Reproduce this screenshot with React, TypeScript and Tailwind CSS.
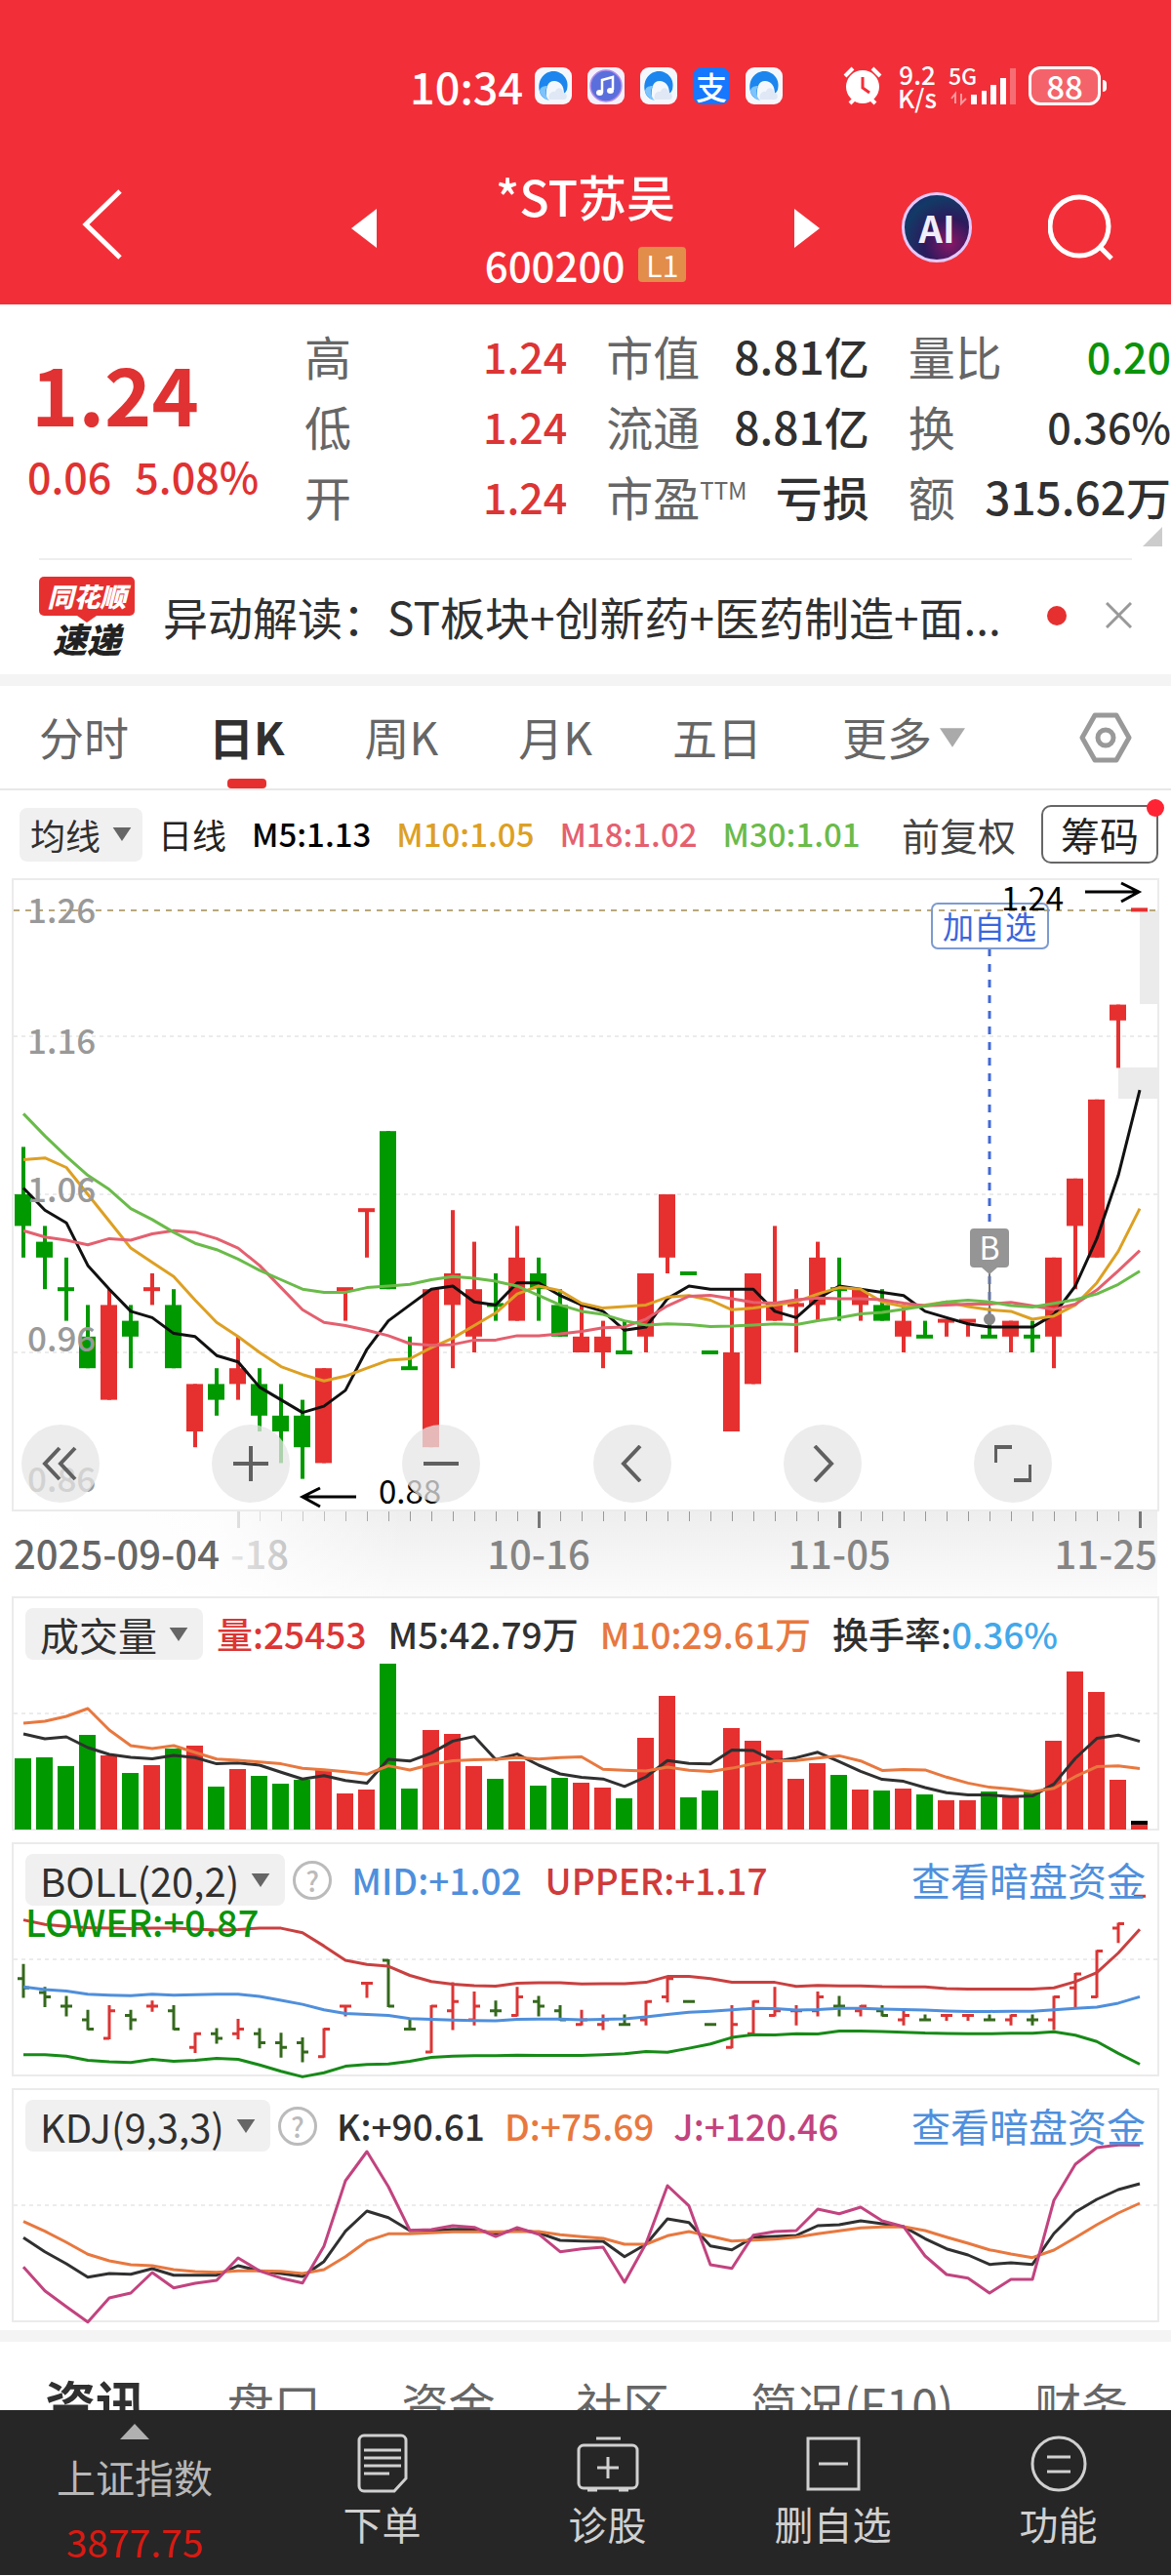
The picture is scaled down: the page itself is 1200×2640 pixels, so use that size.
import React from "react";

// [open, close, high, low] in cents
const candles = [
  [106, 104, 109, 102], [103, 102, 104, 100], [100, 100, 102, 98], [97, 95, 99, 95],
  [93, 99, 100, 93], [98, 97, 99, 95], [100, 100, 101, 99], [99, 95, 100, 95],
  [91, 94, 94, 90], [94, 93, 95, 92], [94, 95, 97, 93], [94, 92, 95, 91],
  [92, 91, 94, 89], [92, 90, 93, 88], [89, 95, 95, 89], [100, 100, 100, 98],
  [105, 105, 105, 102], [110, 100, 110, 100], [95, 95, 97, 95], [90, 100, 100, 90],
  [99, 101, 105, 95], [97, 100, 103, 96], [99, 99, 101, 98], [98, 102, 104, 98],
  [101, 100, 102, 98], [99, 97, 100, 97], [96, 97, 99, 96], [96, 97, 98, 95],
  [96, 96, 98, 96], [97, 101, 101, 96], [102, 106, 106, 101], [101, 101, 101, 101],
  [96, 96, 96, 96], [91, 96, 100, 91], [94, 101, 101, 94], [98, 99, 104, 98],
  [99, 99, 100, 96], [99, 102, 103, 98], [100, 100, 102, 98], [99, 100, 100, 98],
  [99, 98, 100, 98], [97, 98, 99, 96], [97, 97, 98, 97], [98, 98, 98, 97],
  [98, 98, 98, 97], [97, 97, 98, 97], [97, 98, 98, 96], [97, 97, 98, 96],
  [97, 102, 102, 95], [104, 107, 107, 100], [102, 112, 112, 102], [117, 118, 118, 114],
  [124, 124, 124, 124],
];

const volumes = [
  73, 74, 65, 97, 76, 58, 66, 83, 86, 44, 62, 55, 47, 51, 61, 37, 41, 170, 42, 102,
  98, 65, 52, 70, 45, 53, 48, 43, 32, 94, 137, 33, 40, 104, 91, 81, 52, 68, 56, 41,
  40, 42, 36, 30, 30, 39, 34, 39, 91, 162, 141, 51, 7,
];

// averages for the days before the window is full
const lead5 = [106.4, 105, 104.2, 101.5];
const lead10 = [108.2, 108.3, 107.7, 106, 104.3, 102.6, 101.7, 100.8, 99.3];
const lead18 = [
  103.7, 103.3, 103.1, 102.8, 103.2, 103.1, 103.5, 103.7, 103.6, 103.2, 102.6, 101.5,
  100.1, 98.7, 97.9, 97.7, 97.4,
];
const lead30 = [
  111.1, 109.7, 108.4, 107.2, 106.3, 105.1, 104.4, 103.6, 102.9, 102.5, 101.9, 101.2,
  100.6, 100, 99.8, 99.8, 100.1, 100.2, 100.3, 100.6, 100.8, 100.7, 100.5, 100.2, 99.6,
  99, 98.6, 98.4, 98,
];
const leadMid = [
  104.2, 103.6, 103.3, 102.6, 102.4, 102.3, 102.6, 102.4, 102.5, 102.6, 102.6, 102.1,
  101.3, 100.4, 99.2, 98.4, 98.2, 98, 97.3,
];
const leadUpper = [
  118.8, 117.8, 117.4, 117.1, 117, 116.9, 117, 117, 116.8, 116.6, 116.7, 117, 117, 116,
  113.1, 110, 109.1, 108.7, 106.7,
];
const leadLower = [
  89.4, 89.4, 89.1, 88.2, 87.9, 87.7, 88.4, 88, 88.2, 88.6, 88.4, 87.2, 85.8, 84.6,
  85.5, 86.9, 87.3, 87.4, 88,
];

const kLine = [
  490, 533, 570, 611, 600, 602, 585, 605, 605, 605, 576, 592, 600, 609, 563, 470, 408,
  428, 468, 468, 464, 464, 478, 465, 475, 498, 500, 501, 548, 510, 432, 443, 515, 527,
  488, 486, 483, 453, 450, 438, 447, 456, 493, 524, 543, 572, 567, 572, 477, 411, 372,
  342, 324,
];
const dLine = [
  440, 470, 504, 541, 561, 573, 576, 588, 594, 596, 592, 592, 593, 600, 588, 548, 500,
  478, 478, 475, 472, 472, 472, 471, 471, 481, 487, 492, 510, 510, 484, 471, 485, 500,
  497, 494, 488, 478, 469, 460, 457, 456, 468, 488, 507, 527, 540, 551, 528, 490, 450,
  414, 384,
];
const jLine = [
  580, 653, 702, 749, 675, 660, 597, 644, 630, 621, 552, 592, 614, 629, 516, 315, 225,
  333, 467, 465, 453, 458, 486, 459, 479, 533, 524, 519, 627, 508, 330, 392, 573, 584,
  482, 471, 468, 402, 416, 396, 438, 456, 546, 603, 614, 660, 618, 618, 375, 264, 213,
  205, 205,
];

const RED = "#e63030";
const GREEN = "#009900";

const closes = candles.map((c) => c[1]);
const rising = candles.map(
  ([o, c], i) => c > o || (c === o && i > 0 && c >= closes[i - 1])
);

const avg = (a: number[]) => a.reduce((s, v) => s + v, 0) / a.length;
const average = (src: number[], n: number, lead: number[]) =>
  src.map((_, i) => (i < n - 1 ? lead[i] : avg(src.slice(i - n + 1, i + 1))));
const band = (side: number, lead: number[]) =>
  closes.map((_, i) => {
    if (i < 19) return lead[i];
    const part = closes.slice(i - 19, i + 1);
    const m = avg(part);
    return m + side * 2 * Math.sqrt(avg(part.map((v) => (v - m) ** 2)));
  });

const cx = (i: number) => 10 + i * 22;
const priceY = (c: number) => 486 - (c - 96) * 16.2;
const bollY = (c: number) => 119 - (c - 110) * 4.7;
const volY = (v: number) => 237 - v;
const kdjY = (v: number) => v / 3 - 12;

type LineProps = { data: number[]; y: (v: number) => number; color: string };

const Line = ({ data, y, color }: LineProps) => (
  <polyline
    points={data.map((v, i) => `${cx(i)},${y(v).toFixed(1)}`).join(" ")}
    fill="none"
    stroke={color}
    strokeWidth={3}
    strokeLinejoin="round"
  />
);

const GridLine = ({ y }: { y: number }) => (
  <line x1={0} x2={1172} y1={y} y2={y} stroke="#d8d8d8" strokeWidth={1} strokeDasharray="4 4" />
);

const Caret = ({ className }: { className: string }) => (
  <svg viewBox="0 0 20 15" className={className} fill="currentColor">
    <path d="M0 0h20L10 15z" />
  </svg>
);

const CloudIcon = () => (
  <svg viewBox="0 0 38 38" className="size-[38px]">
    <rect width="38" height="38" rx="9" fill="#f4f8fd" />
    <path d="M5 25C2 13 10 4 19 4s17 8 14 19c-1 2-2 3-3 4 0-8-4-13-10-13-7 0-9 7-8 19-4-2-6-4-7-8z" fill="#1c86ee" />
    <path d="M5 25c2 5 5 8 10 9-4-4-5-10-2-15-5 0-8 2-8 6z" fill="#7cc4fb" />
    <path d="M15 33c-2-7 4-9 6-8 1-5 8-5 8 1 5 0 5 7 1 7z" fill="#dfe8f4" />
  </svg>
);

const MusicIcon = () => (
  <svg viewBox="0 0 38 38" className="size-[38px]">
    <rect width="38" height="38" rx="9" fill="#f3f0fb" />
    <circle cx="19" cy="19" r="16" fill="#5a6fdc" stroke="#b18be8" strokeWidth="1.5" />
    <path d="M15 26V13l11-3v13" fill="none" stroke="#fff" strokeWidth="2.5" />
    <ellipse cx="12.500" cy="26" rx="3.500" ry="3" fill="#fff" />
    <ellipse cx="23.500" cy="24" rx="3.500" ry="3" fill="#fff" />
  </svg>
);

const StatusBar = () => (
  <div className="flex h-[160px] items-center justify-end pr-[66px] pt-4 text-white">
    <span className="mr-3 text-[45px] font-medium leading-[60px]">10:34</span>
    <div className="flex gap-4">
      <CloudIcon />
      <MusicIcon />
      <CloudIcon />
      <div className="flex size-[38px] items-center justify-center rounded-[9px] bg-[#1677ff] text-[32px] font-medium leading-[38px]">
        支
      </div>
      <CloudIcon />
    </div>
    <svg viewBox="0 0 40 40" className="ml-[62px] size-10" fill="none" stroke="#fff">
      <circle cx="20" cy="21" r="17" fill="#fff" stroke="none" />
      <path d="M2 10l8-8M38 10l-8-8M7 38l4-4M33 38l-4-4" strokeWidth="4" />
      <path d="M20 11v11l7 5" stroke="#f22f38" strokeWidth="3" />
    </svg>
    <div className="ml-4 text-center text-[26px] font-medium leading-6">
      <div>9.2</div>
      <div>K/s</div>
    </div>
    <svg viewBox="0 0 68 40" className="ml-3.5 h-10 w-[68px] overflow-visible" fill="#fff">
      <text x="-2" y="19" fontSize="23" fontWeight="500">5G</text>
      <path d="M5 38V28l-4 5M11 28v10l5-5" fill="none" stroke="#fff" strokeOpacity=".5" strokeWidth="2" />
      <path d="M21 29h6v10h-6zM32 25h5v14h-5zM41 19h6v20h-6zM51 12h6v27h-6z" />
      <path d="M61 2h6v37h-6z" opacity=".3" />
    </svg>
    <div className="ml-3 flex h-10 w-[74px] items-center justify-center rounded-xl border-[3px] border-white bg-white/25 text-[33px] font-medium leading-[34px]">
      88
    </div>
    <div className="ml-0.5 h-3 w-1 rounded-r bg-white" />
  </div>
);

const TitleBar = () => (
  <div className="grid h-[152px] grid-cols-[3fr_4fr_3fr] items-center text-white">
    <button aria-label="返回" className="justify-self-start pb-3 pl-[82px]">
      <svg viewBox="0 0 44 74" className="h-[74px] w-11" fill="none" stroke="#fff" strokeWidth="5">
        <path d="M41 3L6 37l35 34" />
      </svg>
    </button>
    <div className="flex items-center justify-between">
      <button aria-label="上一只" className="pb-1">
        <svg viewBox="0 0 26 40" className="h-10 w-[26px]" fill="#fff">
          <path d="M26 0v40L0 20z" />
        </svg>
      </button>
      <div className="flex flex-col items-center pb-0.5">
        <h1 className="text-[50px] font-medium leading-[72px]">*ST苏吴</h1>
        <div className="flex items-center gap-3.5 text-[42px] font-medium leading-[70px]">
          600200
          <span className="rounded-[4px] bg-[#e38d4a] px-2 text-[30px] font-normal leading-9">L1</span>
        </div>
      </div>
      <button aria-label="下一只" className="pb-1">
        <svg viewBox="0 0 26 40" className="h-10 w-[26px]" fill="#fff">
          <path d="M0 0v40l26-20z" />
        </svg>
      </button>
    </div>
    <div className="flex items-center justify-end gap-[78px] pb-1.5 pr-[58px]">
      <button
        aria-label="AI"
        className="size-[72px] rounded-full border-[3px] border-[#e3c8fb] bg-[radial-gradient(circle_at_70%_75%,#8a1668_0%,#2c1a5c_38%,#123a66_70%,#2b1a74_100%)] text-[38px] font-bold leading-[62px] text-[#f0eefa]"
      >
        AI
      </button>
      <button aria-label="搜索">
        <svg viewBox="0 0 68 68" className="size-[68px]" fill="none" stroke="#fff" strokeWidth="5">
          <circle cx="32" cy="33" r="30" />
          <path d="M53 54l12 12" />
        </svg>
      </button>
    </div>
  </div>
);

const stats = [
  [
    { label: "高", value: "1.24", style: "text-[43px] text-[#dc3535]" },
    { label: "低", value: "1.24", style: "text-[43px] text-[#dc3535]" },
    { label: "开", value: "1.24", style: "text-[43px] text-[#dc3535]" },
  ],
  [
    { label: "市值", value: "8.81亿", style: "text-[46px] text-[#303030]" },
    { label: "流通", value: "8.81亿", style: "text-[46px] text-[#303030]" },
    { label: "市盈", sup: "TTM", value: "亏损", style: "text-[48px] text-[#303030]" },
  ],
  [
    { label: "量比", value: "0.20", style: "text-[43px] text-[#0a930a]" },
    { label: "换", value: "0.36%", style: "text-[43px] text-[#303030]" },
    { label: "额", value: "315.62万", style: "text-[46px] text-[#303030]" },
  ],
];

const Quote = () => (
  <section className="bg-white">
    <div className="flex pt-4">
      <div className="w-[312px] shrink-0 pt-5 text-[#e03232]">
        <div className="pl-8 text-[82px] font-bold leading-[108px]">1.24</div>
        <div className="flex gap-6 pl-7 text-[43px] font-medium leading-[62px]">
          <span>0.06</span>
          <span>5.08%</span>
        </div>
      </div>
      <div className="flex flex-1 gap-10">
        {stats.map((col, i) => (
          <dl key={i} className="flex-1">
            {col.map((s) => (
              <div key={s.label} className="flex h-[72px] items-center justify-between whitespace-nowrap">
                <dt className="flex text-[48px] leading-[72px] text-[#666]">
                  {s.label}
                  {s.sup && <sup className="top-0 pt-3 text-[24px] leading-9">{s.sup}</sup>}
                </dt>
                <dd className={`font-medium leading-[72px] ${s.style}`}>{s.value}</dd>
              </div>
            ))}
          </dl>
        ))}
      </div>
    </div>
    <div className="flex h-7 items-start justify-end pr-[9px]">
      <svg viewBox="0 0 20 20" className="-mt-1 size-5" fill="#ccc">
        <path d="M20 0v20H0z" />
      </svg>
    </div>
  </section>
);

const News = () => (
  <section className="px-10">
    <div className="flex h-[119px] items-center border-t-2 border-[#eee] pb-1">
      <div className="flex w-[98px] shrink-0 flex-col items-center">
        <div className="w-full rounded-[5px] bg-[#e63030] text-center text-[27px] font-black italic leading-10 text-white">
          同花顺
        </div>
        <svg viewBox="0 0 20 7" className="h-[7px] w-5" fill="#e63030">
          <path d="M0 0h20L10 7z" />
        </svg>
        <div className="text-[35px] font-black italic leading-8 text-[#222]">速递</div>
      </div>
      <a href="#news" className="ml-[29px] flex-1 truncate text-[46px] leading-[64px] text-[#303030]">
        异动解读：ST板块+创新药+医药制造+面...
      </a>
      <span className="size-5 rounded-full bg-[#e63030]" />
      <button aria-label="关闭" className="ml-10">
        <svg viewBox="0 0 27 27" className="size-[27px]" fill="none" stroke="#999" strokeWidth="3">
          <path d="M1 1l25 25M26 1L1 26" />
        </svg>
      </button>
    </div>
  </section>
);

const periods = ["分时", "日K", "周K", "月K", "五日"];

const PeriodTabs = () => (
  <nav className="flex h-[107px] items-stretch gap-[82px] border-b-2 border-[#e8e8e8] px-10 text-[46px] leading-[102px] text-[#666]">
    {periods.map((p) =>
      p === "日K" ? (
        <button key={p} className="flex flex-col items-center font-bold text-[#303030]">
          <span className="h-[95px]">{p}</span>
          <span className="h-2.5 w-10 rounded-[4px] bg-[#e63030]" />
        </button>
      ) : (
        <button key={p} className="flex">
          {p}
        </button>
      )
    )}
    <button className="flex items-center gap-2">
      <span className="self-start">更多</span>
      <Caret className="h-5 w-[26px] text-[#aaa]" />
    </button>
    <button aria-label="设置" className="ml-auto">
      <svg viewBox="0 0 54 52" className="h-[52px] w-[54px]" fill="none" stroke="#999" strokeWidth="5">
        <path d="M16 3h22l13 23-13 23H16L3 26z" strokeLinejoin="round" />
        <circle cx="27" cy="26" r="8" />
      </svg>
    </button>
  </nav>
);

const Averages = () => (
  <div className="flex h-[90px] items-center whitespace-nowrap pl-5 pr-[13px] text-[33px] font-medium">
    <button className="flex h-[55px] items-center gap-3 rounded-lg bg-[#f0f0f0] px-[11px] text-[36px] font-normal leading-[50px] text-[#303030]">
      均线
      <Caret className="h-3.5 w-5 text-[#666]" />
    </button>
    <span className="ml-4 text-[35px] font-normal text-[#222]">日线</span>
    <div className="ml-[26px] flex gap-[26px]">
      <span className="text-black">M5:1.13</span>
      <span className="text-[#dda023]">M10:1.05</span>
      <span className="text-[#e4606f]">M18:1.02</span>
      <span className="text-[#6abb4a]">M30:1.01</span>
    </div>
    <span className="ml-auto mr-[26px] text-[39px] font-normal text-[#444]">前复权</span>
    <button className="relative h-[60px] rounded-[10px] border-2 border-[#666] px-[18px] text-[40px] font-normal leading-[52px] text-[#222]">
      筹码
      <span className="absolute -right-2 -top-2 size-[18px] rounded-full bg-[#ff2433]" />
    </button>
  </div>
);

const chartTools = [
  { name: "最早", d: "M18 3L3 19l15 16M34 3L19 19l15 16" },
  { name: "放大", d: "M19 1v36M1 19h36" },
  { name: "缩小", d: "M1 19h36" },
  { name: "左移", d: "M27 1L10 19l17 18" },
  { name: "右移", d: "M11 1l17 18-17 18" },
  { name: "全屏", d: "M1 18V2h17M37 20v16H20" },
];

const axisLabels = [
  { text: "1.26", y: 46 },
  { text: "1.16", y: 180 },
  { text: "1.06", y: 332 },
  { text: "0.96", y: 485 },
  { text: "0.86", y: 629 },
];

const CandleChart = () => (
  <div className="grid border-2 border-[#ebebeb]">
    <svg viewBox="0 2 1172 645" className="col-start-1 row-start-1 h-auto w-full">
      <path d="M1154 33h18v96h-18zM1132 194h40v32h-40z" fill="#ebebeb" />
      <GridLine y={162} />
      <GridLine y={324} />
      <GridLine y={486} />
      <line x1={0} x2={1172} y1={33} y2={33} stroke="#b9a87c" strokeWidth={2} strokeDasharray="6 6" />
      {candles.map(([o, c, h, l], i) => {
        const top = priceY(Math.max(o, c));
        const color = rising[i] ? RED : GREEN;
        return (
          <g key={i} fill={color}>
            <rect x={cx(i) - 2} y={priceY(h)} width={4} height={priceY(l) - priceY(h)} />
            <rect
              x={cx(i) - 9}
              y={o === c ? top - 2 : top}
              width={17}
              height={Math.max(4, Math.abs(o - c) * 16.2)}
            />
          </g>
        );
      })}
      <line x1={1000} x2={1000} y1={72} y2={450} stroke="#4169d8" strokeWidth={3} strokeDasharray="8 8" />
      <line x1={1000} x2={1000} y1={404} y2={450} stroke="#777" strokeWidth={2} />
      <circle cx={1000} cy={452} r={6} fill="#888" />
      <Line data={average(closes, 5, lead5)} y={priceY} color="#111" />
      <Line data={average(closes, 10, lead10)} y={priceY} color="#dda023" />
      <Line data={average(closes, 18, lead18)} y={priceY} color="#e4606f" />
      <Line data={average(closes, 30, lead30)} y={priceY} color="#6abb4a" />
      <path d="M984 359h32a4 4 0 0 1 4 4v32a4 4 0 0 1-4 4h-8l-8 7-8-7h-8a4 4 0 0 1-4-4v-32a4 4 0 0 1 4-4z" fill="#959595" />
      <text x={1000} y={391} textAnchor="middle" fontSize={32} fill="#fff">B</text>
      <rect x={941} y={26} width={119} height={46} rx={6} fill="none" stroke="#7d9bd0" strokeWidth={2} />
      <text x={952} y={62} fontSize={32} fill="#3b66dc">加自选</text>
      <text x={1012} y={33} fontSize={33} fill="#000">1.24</text>
      <text x={374} y={641} fontSize={33} fill="#000">0.88</text>
      <path d="M1098 14h54M1135 5l18 9-18 10M351 634h-54M314 625l-18 9 18 10" fill="none" stroke="#000" strokeWidth={3} />
      <g fontSize={35} fontWeight={500} fill="#999">
        {axisLabels.map((a) => (
          <text key={a.text} x={14} y={a.y}>{a.text}</text>
        ))}
      </g>
    </svg>
    <div className="z-10 col-start-1 row-start-1 flex justify-between self-end pb-[7px] pl-2 pr-[108px]">
      {chartTools.map((t) => (
        <button
          key={t.name}
          aria-label={t.name}
          className="flex size-20 items-center justify-center rounded-full bg-[#e6e6e6]/75"
        >
          <svg viewBox="0 0 38 38" className="size-[38px]" fill="none" stroke="#606060" strokeWidth="4">
            <path d={t.d} />
          </svg>
        </button>
      ))}
    </div>
  </div>
);

const DateAxis = () => (
  <svg viewBox="0 0 1172 87" className="h-auto w-full px-0.5">
    <defs>
      <linearGradient id="shade" x1="0" y1="0" x2="0" y2="1">
        <stop offset="0" stopColor="#eeeeee" />
        <stop offset="1" stopColor="#fbfbfb" />
      </linearGradient>
      <linearGradient id="fade">
        <stop offset="0" stopColor="#fff" />
        <stop offset="0.500" stopColor="#fff" stopOpacity="0.900" />
        <stop offset="1" stopColor="#fff" stopOpacity="0" />
      </linearGradient>
    </defs>
    <rect width="1172" height="87" fill="url(#shade)" />
    {candles.map((_, i) => {
      if (i < 10) return null;
      const major = i % 14 === 10;
      return (
        <rect
          key={i}
          x={cx(i) - (major ? 1 : 0)}
          y={0}
          width={major ? 3 : 1}
          height={major ? 17 : 10}
          fill={major ? "#777" : "#999"}
        />
      );
    })}
    <g fontSize={40} fontWeight={500} fill="#858585">
      <text x={282} y={59} textAnchor="end">-18</text>
      <text x={538} y={59} textAnchor="middle">10-16</text>
      <text x={846} y={59} textAnchor="middle">11-05</text>
      <text x={1172} y={59} textAnchor="end">11-25</text>
    </g>
    <rect width="400" height="87" fill="url(#fade)" />
    <text x={0} y={59} fontSize={40} fontWeight={500} fill="#666">2025-09-04</text>
  </svg>
);

const Picker = ({ children }: { children: React.ReactNode }) => (
  <button className="flex h-[53px] items-center gap-3 rounded-lg bg-[#f0f0f0] px-[15px] text-[40px] font-normal leading-[50px] text-[#303030]">
    {children}
    <Caret className="h-3.5 w-5 text-[#666]" />
  </button>
);

const Help = () => (
  <button
    aria-label="帮助"
    className="ml-2 flex size-10 items-center justify-center rounded-full border-[3px] border-[#bbb] text-[28px] leading-8 text-[#bbb]"
  >
    ?
  </button>
);

const DarkPool = () => (
  <a href="#fund" className="ml-auto text-[40px] font-normal text-[#4f8fdc]">
    查看暗盘资金
  </a>
);

type PanelProps = { header: React.ReactNode; children: React.ReactNode };

const Panel = ({ header, children }: PanelProps) => (
  <section className="grid border-2 border-[#ebebeb]">
    <svg viewBox="0 0 1172 236" className="col-start-1 row-start-1 h-auto w-full overflow-visible">
      {children}
    </svg>
    <div className="z-10 col-start-1 row-start-1 self-start whitespace-nowrap pl-3 pr-3 pt-2.5 text-[37px] font-medium leading-[53px]">
      {header}
    </div>
  </section>
);

const Volume = () => (
  <Panel
    header={
      <div className="flex items-center gap-[22px]">
        <Picker>成交量</Picker>
        <span className="-ml-2 text-[#dc3535]">量:25453</span>
        <span className="text-[#303030]">M5:42.79万</span>
        <span className="text-[#e8783f]">M10:29.61万</span>
        <span className="text-[#303030]">
          换手率:<span className="text-[#42a8ea]">0.36%</span>
        </span>
      </div>
    }
  >
    <GridLine y={118} />
    {volumes.map((v, i) => (
      <rect key={i} x={cx(i) - 9} y={volY(v)} width={17} height={v} fill={rising[i] ? RED : GREEN} />
    ))}
    <rect x={cx(52) - 9} y={228} width={17} height={4} fill="#000" />
    <Line data={average(volumes, 5, [98, 93, 95, 84])} y={volY} color="#303030" />
    <Line
      data={average(volumes, 10, [109, 111, 116, 124, 102, 86, 83, 86, 79])}
      y={volY}
      color="#e8783f"
    />
  </Panel>
);

const Boll = () => (
  <Panel
    header={
      <>
        <div className="flex items-center">
          <Picker>BOLL(20,2)</Picker>
          <Help />
          <span className="ml-5 text-[#4f8fdc]">MID:+1.02</span>
          <span className="ml-6 text-[#cf3a3a]">UPPER:+1.17</span>
          <DarkPool />
        </div>
        <div className="text-[38px] leading-8 text-[#0a930a]">LOWER:+0.87</div>
      </>
    }
  >
    <GridLine y={118} />
    {candles.map(([o, c, h, l], i) => (
      <path
        key={i}
        d={`M${cx(i)} ${bollY(h) - 1}V${bollY(l) + 1}M${cx(i) - 6} ${bollY(o)}H${cx(i)}M${cx(i)} ${bollY(c)}H${cx(i) + 6}`}
        fill="none"
        stroke={rising[i] ? "#dc3535" : "#35691d"}
        strokeWidth={3}
      />
    ))}
    <Line data={band(1, leadUpper)} y={bollY} color="#c94040" />
    <Line data={average(closes, 20, leadMid)} y={bollY} color="#4f8fdc" />
    <Line data={band(-1, leadLower)} y={bollY} color="#178a17" />
  </Panel>
);

const Kdj = () => (
  <Panel
    header={
      <div className="flex items-center">
        <Picker>KDJ(9,3,3)</Picker>
        <Help />
        <span className="ml-5 text-[#303030]">K:+90.61</span>
        <span className="ml-5 text-[#e8783f]">D:+75.69</span>
        <span className="ml-5 text-[#c2437f]">J:+120.46</span>
        <DarkPool />
      </div>
    }
  >
    <GridLine y={118} />
    <Line data={kLine} y={kdjY} color="#303030" />
    <Line data={dLine} y={kdjY} color="#e8783f" />
    <Line data={jLine} y={kdjY} color="#c2437f" />
  </Panel>
);

const InfoTabs = () => (
  <nav className="flex h-[70px] justify-between overflow-hidden whitespace-nowrap pl-[46px] pr-11 pt-[26px] text-[48px] leading-[72px] text-[#666]">
    <button className="flex text-[52px] font-bold text-[#303030]">资讯</button>
    <button className="flex">盘口</button>
    <button className="flex">资金</button>
    <button className="flex">社区</button>
    <button className="flex">简况(F10)</button>
    <button className="flex">财务</button>
  </nav>
);

const actions = [
  {
    label: "下单",
    icon: (
      <>
        <path d="M9 2h38a5 5 0 0 1 5 5v39L40 59H9a5 5 0 0 1-5-5V7a5 5 0 0 1 5-5z" />
        <path d="M9 17h38M9 25h38M9 33h38M9 41h26" />
      </>
    ),
  },
  {
    label: "诊股",
    icon: (
      <>
        <rect x="-2" y="12" width="60" height="44" rx="5" />
        <path d="M16 5h25M28 24v22M17 35h22M7 58h10M39 58h10" />
      </>
    ),
  },
  {
    label: "删自选",
    icon: <path d="M2 5h52v52H2zM13 31h30" />,
  },
  {
    label: "功能",
    icon: (
      <>
        <circle cx="28" cy="31" r="27" />
        <path d="M16 24h24M16 39h24" />
      </>
    ),
  },
];

const BottomBar = () => (
  <nav className="grid h-[169px] grid-cols-[276fr_231fr_231fr_231fr_231fr] bg-[#262626] text-[40px] text-[#d0d0d0]">
    <button className="flex flex-col items-center pt-3.5">
      <svg viewBox="0 0 30 16" className="h-4 w-[30px]" fill="#b0b0b0">
        <path d="M0 16L15 0l15 16z" />
      </svg>
      <span className="pt-2 leading-[60px] text-[#b8b8b8]">上证指数</span>
      <span className="pt-2 text-[39px] leading-[56px] text-[#d91a12]">3877.75</span>
    </button>
    {actions.map((a) => (
      <button key={a.label} className="flex flex-col items-center pt-6">
        <svg viewBox="0 0 56 62" className="h-[62px] w-14 overflow-visible" fill="none" stroke="#d0d0d0" strokeWidth="3">
          {a.icon}
        </svg>
        <span className="leading-[60px]">{a.label}</span>
      </button>
    ))}
  </nav>
);

const App = () => {
  return (
    <div className="bg-white font-['Noto_Sans_CJK_SC',sans-serif]">
      <header className="bg-[#f22f38]">
        <StatusBar />
        <TitleBar />
      </header>
      <Quote />
      <News />
      <div className="h-3 bg-[#f4f4f4]" />
      <PeriodTabs />
      <Averages />
      <main className="px-3">
        <CandleChart />
        <DateAxis />
        <div className="flex flex-col gap-3">
          <Volume />
          <Boll />
          <Kdj />
        </div>
      </main>
      <div className="mt-2 h-3 bg-[#f4f4f4]" />
      <InfoTabs />
      <BottomBar />
    </div>
  );
};

export default App;
